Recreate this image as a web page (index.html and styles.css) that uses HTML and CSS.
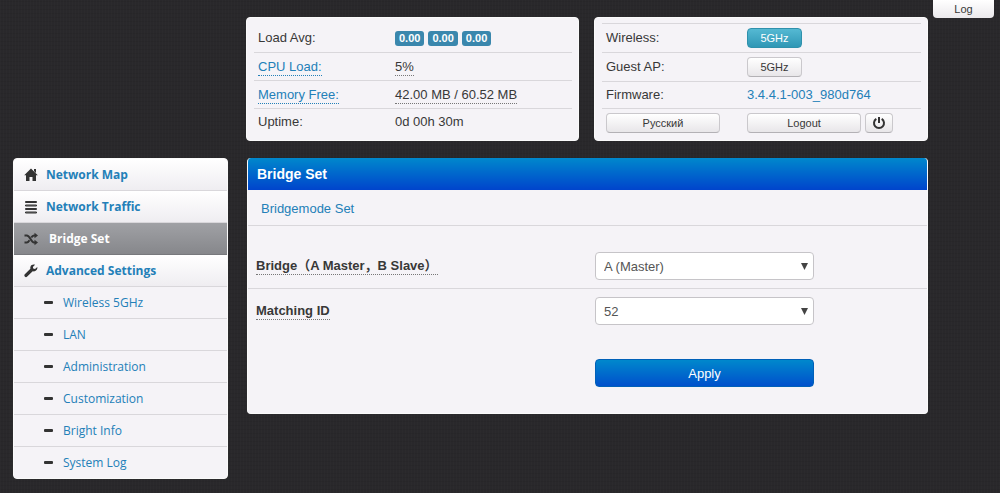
FILE: index.html
```
<!DOCTYPE html>
<html lang="en">
<head>
<meta charset="utf-8">
<meta name="viewport" content="width=device-width, initial-scale=1">
<title>Bridge Set</title>
<link rel="stylesheet" href="styles.css">
</head>
<body>
<button type="button" class="log-tab">Log</button>
<div class="page">
  <header class="status">
    <section class="panel status-panel">
      <dl class="status-list system">
        <div class="status-row"><dt>Load Avg:</dt><dd class="badges"><span class="badge">0.00</span><span class="badge">0.00</span><span class="badge">0.00</span></dd></div>
        <div class="status-row"><dt><a class="hint" href="#cpu">CPU Load:</a></dt><dd><span class="hint">5%</span></dd></div>
        <div class="status-row"><dt><a class="hint" href="#memory">Memory Free:</a></dt><dd><span class="hint">42.00 MB / 60.52 MB</span></dd></div>
        <div class="status-row"><dt>Uptime:</dt><dd>0d 00h 30m</dd></div>
      </dl>
    </section>
    <section class="panel status-panel">
      <dl class="status-list network">
        <div class="status-row"><dt>Wireless:</dt><dd><button type="button" class="btn btn-band btn-info">5GHz</button></dd></div>
        <div class="status-row"><dt>Guest AP:</dt><dd><button type="button" class="btn btn-band">5GHz</button></dd></div>
        <div class="status-row"><dt>Firmware:</dt><dd><a href="#firmware">3.4.4.1-003_980d764</a></dd></div>
        <div class="status-row"><dt><button type="button" class="btn btn-wide">Русский</button></dt>
          <dd class="actions"><button type="button" class="btn btn-wide">Logout</button><button type="button" class="btn btn-power" aria-label="Reboot"><svg viewBox="0 0 14 14" width="14" height="14" fill="none" stroke="#333" stroke-width="2"><path d="M4.3 2.9a5 5 0 1 0 5.4 0M7 1v6"/></svg></button></dd></div>
      </dl>
    </section>
  </header>
  <div class="body">
    <nav class="panel menu">
      <a class="menu-item" href="#map"><svg class="icon" viewBox="0 0 14 14"><path d="M7 .5 13.8 7.300H12V13H8.500V9H5.500V13H2V7.300H.2L7 .5ZM10 1h2v4L10 3Z"/></svg>Network Map</a>
      <a class="menu-item" href="#traffic"><svg class="icon" viewBox="0 0 14 14"><path class="bars" d="M1.500 1.500h11v1h-11ZM1.500 5h11v1h-11ZM1.500 8.500h11v1h-11ZM1.500 12h11v1h-11Z"/></svg>Network Traffic</a>
      <a class="menu-item active" href="#bridge" aria-current="page"><svg class="icon" viewBox="0 0 14 14"><path class="line" d="M.5 3.500h2.300c3.200 0 4.200 7 7.200 7h1M.5 10.500h2.300c1.200 0 2-1 2.700-2.200M7.300 5.600C8 4.400 8.800 3.500 10 3.500h1"/><path d="M10.500.8 14 3.500l-3.500 2.700ZM10.500 7.800 14 10.500l-3.500 2.700Z"/></svg>Bridge Set</a>
      <a class="menu-item" href="#advanced"><svg class="icon" viewBox="0 0 14 14"><path d="M13.300 3.100 11 4.900 9.200 4.600 8.900 3 11 .8C9 .2 7 1.100 6.400 2.900c-.2.700-.2 1.300 0 1.900L.8 10.300c-.6.700-.6 1.700 0 2.300.7.700 1.700.7 2.400 0l5.500-5.300c2.700.8 5.100-1.500 4.600-4.200Z"/></svg>Advanced Settings</a>
      <a class="menu-item sub" href="#wireless">Wireless 5GHz</a>
      <a class="menu-item sub" href="#lan">LAN</a>
      <a class="menu-item sub" href="#administration">Administration</a>
      <a class="menu-item sub" href="#customization">Customization</a>
      <a class="menu-item sub" href="#info">Bright Info</a>
      <a class="menu-item sub" href="#syslog">System Log</a>
    </nav>
    <main class="panel content">
      <h1 class="title">Bridge Set</h1>
      <div class="tabs"><a href="#mode">Bridgemode Set</a></div>
      <form class="form">
        <div class="field"><label for="role"><span class="hint">Bridge（A Master，B Slave）</span></label>
          <select id="role"><option>A (Master)</option><option>B (Slave)</option></select></div>
        <div class="field"><label for="match"><span class="hint">Matching ID</span></label>
          <select id="match"><option>52</option></select></div>
        <div class="submit"><button type="button" class="apply">Apply</button></div>
      </form>
    </main>
  </div>
</div>
</body>
</html>
```
FILE: styles.css
```
* { box-sizing: border-box; }
body {
  margin: 0;
  min-height: 100vh;
  color: #383838;
  font: 13px/20px "Liberation Sans", "Noto Sans CJK SC", Arial, sans-serif;
  background:
    repeating-linear-gradient(90deg, rgba(255, 255, 255, .012) 0 1px, transparent 1px 3px),
    repeating-linear-gradient(0deg, rgba(0, 0, 0, .06) 0 1px, transparent 1px 4px),
    #29282b;
}
a { color: #2380b8; text-decoration: none; }
button, select { font-family: inherit; }
.page { padding: 17px 72px 15px 13px; }
.panel {
  background: #f5f3f7;
  border: 1px solid #fafafa;
  border-radius: 4px;
}
.log-tab {
  position: absolute;
  top: 0;
  right: 6px;
  width: 61px;
  height: 18px;
  padding: 0;
  color: #383838;
  font-size: 11px;
  line-height: 16px;
  background: linear-gradient(#fff, #ebe9ec);
  border: 0;
  border-radius: 0 0 4px 4px;
}

.status {
  display: grid;
  grid-template-columns: 333px 1fr;
  gap: 15px;
  margin-left: 233px;
}
.status-panel { padding: 5px 6px 4px 7px; }
.status-list { margin: 0; }
.status-row {
  display: flex;
  align-items: center;
  height: 28px;
  padding-left: 4px;
  border-top: 1px solid #d9d7db;
}
.status-list dt { flex: none; width: 137px; }
.status-list dd { margin: 0; }
.system .status-row:first-child { height: 29px; border-top-color: transparent; }
.system .status-row:last-child { height: 27px; }
.network .status-row:nth-child(-n+2) { height: 29px; }
.network .status-row:nth-child(3) { height: 27px; }
.network dt { width: 141px; }
.hint { padding-bottom: 1px; border-bottom: 1px dotted #777; }
a.hint { border-color: #2380b8; }
.badges, .actions { display: flex; gap: 4px; }
.badge {
  padding: 0 4px;
  color: #fff;
  font-size: 11px;
  font-weight: bold;
  line-height: 15px;
  background: #3a87ad;
  border-radius: 3px;
}
.btn {
  display: block;
  height: 20px;
  padding: 0;
  color: #383838;
  font-size: 11px;
  line-height: 18px;
  background: linear-gradient(#fff, #e8e6e9);
  border: 1px solid #cac8cc;
  border-bottom-color: #b3b1b5;
  border-radius: 4px;
}
.btn-band { width: 55px; }
.btn-wide { width: 114px; }
.btn-power { display: grid; place-items: center; width: 28px; }
.btn-info {
  color: #fff;
  background: linear-gradient(#55b9d3, #2f97b5);
  border-color: #2f91ac;
}

.body {
  display: grid;
  grid-template-columns: 215px 1fr;
  gap: 19px;
  align-items: start;
  margin-top: 17px;
}
.menu {
  overflow: hidden;
  font: 12px/20px "Open Sans", "Noto Sans", sans-serif;
}
.menu-item {
  display: flex;
  align-items: center;
  gap: 8px;
  height: 32px;
  padding-left: 10px;
  font-weight: bold;
  background: linear-gradient(#fff, #efedf1);
  border-bottom: 1px solid #d9d7db;
}
.menu-item.active {
  gap: 11px;
  color: #fff;
  background: linear-gradient(#a0a1a5, #86878b);
  border-color: #77787c;
}
.menu-item.sub {
  gap: 10px;
  padding-left: 30px;
  font-weight: normal;
  background: none;
}
.menu-item.sub::before {
  content: "";
  width: 9px;
  height: 3px;
  background: #333;
  border-radius: 1px;
}
.menu-item:last-child { height: 31px; border: 0; }
.icon { width: 14px; height: 14px; fill: #333; }
.icon .line { fill: none; stroke: #333; stroke-width: 2; }
.icon .bars { fill: #999; stroke: #333; stroke-width: 1; stroke-linejoin: round; }

.content { overflow: hidden; border-top: 0; }
.title {
  margin: 0;
  padding-left: 9px;
  color: #fff;
  font-size: 14px;
  line-height: 32px;
  background: linear-gradient(#0088cc, #0044cc);
}
.tabs {
  padding: 9px 13px 6px;
  border-bottom: 1px solid #d9d7db;
}
.form { padding: 18px 0 26px; }
.field, .submit {
  display: grid;
  grid-template-columns: 339px 219px;
  align-items: center;
  padding: 8px;
}
.field:nth-child(2) { border-top: 1px solid #d9d7db; }
label { font-weight: bold; }
select {
  appearance: none;
  height: 28px;
  padding: 0 8px;
  color: #555;
  font-size: 13px;
  background: #fff url("data:image/svg+xml,%3Csvg xmlns='http://www.w3.org/2000/svg' width='7' height='7'%3E%3Cpath d='M0 0h7L3.500 7z' fill='%23444'/%3E%3C/svg%3E") no-repeat right 5px center;
  border: 1px solid #c6c4c8;
  border-radius: 4px;
}
.submit { padding-top: 26px; padding-bottom: 0; }
.apply {
  grid-column: 2;
  height: 28px;
  color: #fff;
  font-size: 13px;
  background: linear-gradient(#0088cc, #0050cc);
  border: 1px solid #0060b8;
  border-radius: 4px;
}
```
